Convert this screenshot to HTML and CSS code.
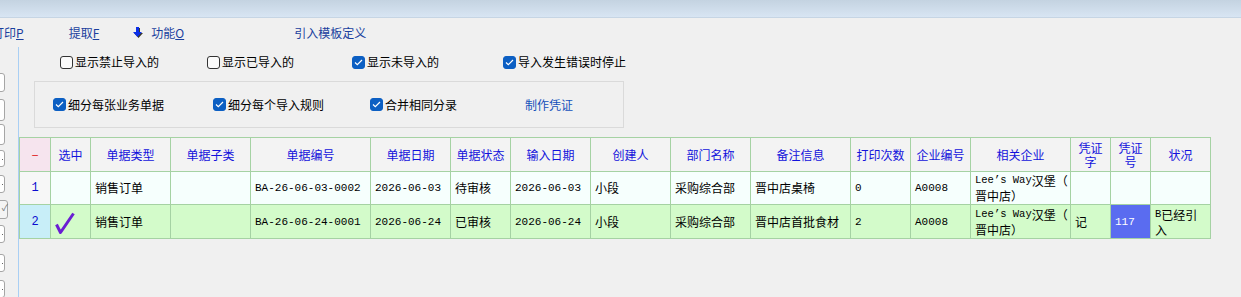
FILE: index.html
```html
<!DOCTYPE html>
<html lang="zh-CN">
<head>
<meta charset="utf-8">
<title>引入模板</title>
<link rel="stylesheet" href="styles.css">
</head>
<body>
<div class="titlebar"></div>
<div class="toolbar">
  <span class="tb tb-print">打印<u>P</u></span>
  <span class="tb tb-fetch">提取<u>F</u></span>
  <span class="tb tb-func"><svg class="arrow" width="10" height="11" viewBox="0 0 10 11"><path d="M4 1h3v5h3l-4.5 5L1 6h3z" fill="#3a3a2a"/><path d="M3 0h3v5h3L4.5 10 0 5h3z" fill="#0a2ee8"/></svg>功能<u>O</u></span>
  <span class="tb tb-tpl">引入模板定义</span>
</div>
<div class="main">
  <div class="side">
    <div class="sbox s1"></div>
    <div class="sbox s2"></div>
    <div class="sbox s3"></div>
    <div class="sbox s4"><i></i></div>
    <div class="sbox s5"><i></i></div>
    <div class="sbox s6"><b>✓</b></div>
    <div class="sbox s7"><i></i></div>
    <div class="sbox s8"><i></i></div>
    <div class="sbox s9"><i></i></div>
  </div>
  <div class="content">
    <div class="opts">
      <label class="cb"><span class="box"></span>显示禁止导入的</label>
      <label class="cb"><span class="box"></span>显示已导入的</label>
      <label class="cb"><span class="box on"><svg width="9" height="7" viewBox="0 0 9 7"><path d="M1 3.5l2.3 2.2L8 1" fill="none" stroke="#fff" stroke-width="1.2"/></svg></span>显示未导入的</label>
      <label class="cb"><span class="box on"><svg width="9" height="7" viewBox="0 0 9 7"><path d="M1 3.5l2.3 2.2L8 1" fill="none" stroke="#fff" stroke-width="1.2"/></svg></span>导入发生错误时停止</label>
    </div>
    <div class="group">
      <label class="cb"><span class="box on"><svg width="9" height="7" viewBox="0 0 9 7"><path d="M1 3.5l2.3 2.2L8 1" fill="none" stroke="#fff" stroke-width="1.2"/></svg></span>细分每张业务单据</label>
      <label class="cb"><span class="box on"><svg width="9" height="7" viewBox="0 0 9 7"><path d="M1 3.5l2.3 2.2L8 1" fill="none" stroke="#fff" stroke-width="1.2"/></svg></span>细分每个导入规则</label>
      <label class="cb"><span class="box on"><svg width="9" height="7" viewBox="0 0 9 7"><path d="M1 3.5l2.3 2.2L8 1" fill="none" stroke="#fff" stroke-width="1.2"/></svg></span>合并相同分录</label>
      <span class="link">制作凭证</span>
    </div>
    <table class="grid">
      <colgroup>
        <col class="w31"><col class="w40"><col class="w80"><col class="w80"><col class="w120"><col class="w80"><col class="w60"><col class="w80"><col class="w80"><col class="w80"><col class="w100"><col class="w60"><col class="w60"><col class="w100"><col class="w40"><col class="w40"><col class="w60">
      </colgroup>
      <thead>
        <tr>
          <th class="corner">−</th><th>选中</th><th>单据类型</th><th>单据子类</th><th>单据编号</th><th>单据日期</th><th>单据状态</th><th>输入日期</th><th>创建人</th><th>部门名称</th><th>备注信息</th><th>打印次数</th><th>企业编号</th><th>相关企业</th><th class="wrap">凭证字</th><th class="wrap">凭证号</th><th>状况</th>
        </tr>
      </thead>
      <tbody>
        <tr class="r1">
          <td class="rn">1</td><td></td><td>销售订单</td><td></td><td class="mono">BA-26-06-03-0002</td><td class="mono">2026-06-03</td><td>待审核</td><td class="mono">2026-06-03</td><td>小段</td><td>采购综合部</td><td>晋中店桌椅</td><td class="mono">0</td><td class="mono">A0008</td><td class="two"><span class="mono">Lee’s Way</span>汉堡（<br>晋中店）</td><td></td><td></td><td></td>
        </tr>
        <tr class="r2">
          <td class="rn">2</td><td class="chk"><svg class="tick" width="20" height="23" viewBox="0 0 20 23"><path d="M1.5 12.5L5.5 20.5L18.5 1.5" fill="none" stroke="#6a1ed2" stroke-width="3" stroke-linejoin="round"/></svg></td><td>销售订单</td><td></td><td class="mono">BA-26-06-24-0001</td><td class="mono">2026-06-24</td><td>已审核</td><td class="mono">2026-06-24</td><td>小段</td><td>采购综合部</td><td>晋中店首批食材</td><td class="mono">2</td><td class="mono">A0008</td><td class="two"><span class="mono">Lee’s Way</span>汉堡（<br>晋中店）</td><td>记</td><td class="sel mono">117</td><td class="two"><span class="mono">B</span>已经引<br>入</td>
        </tr>
      </tbody>
    </table>
  </div>
</div>
</body>
</html>
```

FILE: styles.css
```css
html, body {
  margin: 0;
  padding: 0;
}
body {
  width: 1241px;
  height: 297px;
  overflow: hidden;
  background: #f0f0f0;
  font-family: "Noto Sans CJK SC", "Noto Sans", sans-serif;
  font-size: 12px;
  color: #000;
}
.titlebar {
  height: 17px;
  background: linear-gradient(#c4d3e1, #d8e5f3);
  border-bottom: 1px solid #c6d5e4;
}
.toolbar {
  height: 29px;
  display: flex;
  align-items: center;
  color: #1a3f9e;
  white-space: nowrap;
}
.tb {
  display: flex;
  align-items: center;
  line-height: 14px;
}
.tb u {
  text-decoration: underline;
  text-underline-offset: 1px;
}
.tb-print { margin-left: -8px; }
.tb-fetch { margin-left: 45px; }
.tb-func { margin-left: 34px; }
.arrow { margin-right: 8px; margin-top: -1px; }
.tb-tpl { margin-left: 110px; }

.main {
  display: flex;
  height: 251px;
}
.side {
  width: 19px;
  flex: none;
  border-right: 1px solid #a9cff4;
  display: flex;
  flex-direction: column;
  padding-top: 26px;
  box-sizing: border-box;
}
.sbox {
  position: relative;
  margin-left: -10px;
  width: 15px;
  background: #fff;
  border: 1px solid #a6a6a6;
  border-radius: 3px;
  box-sizing: border-box;
}
.sbox i {
  position: absolute;
  right: 1px;
  top: 50%;
  width: 1px;
  height: 1px;
  background: #666;
}
.sbox b {
  position: absolute;
  right: -1px;
  top: 1px;
  font-size: 9px;
  font-weight: normal;
  color: #777;
  line-height: 12px;
}
.s1 { height: 19px; }
.s2 { height: 22px; margin-top: 7px; }
.s3 { height: 22px; margin-top: 3px; }
.s4 { height: 17px; margin-top: 5px; }
.s5 { height: 18px; margin-top: 8px; }
.s6 { height: 19px; margin-top: 7px; width: 18px; background: #f4f4f4; }
.s7 { height: 19px; margin-top: 6px; }
.s8 { height: 18px; margin-top: 11px; }
.s9 { height: 18px; margin-top: 8px; }

.content {
  flex: 1;
  display: flex;
  flex-direction: column;
  align-items: flex-start;
}
.cb {
  display: flex;
  align-items: center;
  white-space: nowrap;
  line-height: 16px;
}
.box {
  width: 13px;
  height: 13px;
  box-sizing: border-box;
  border: 1px solid #333;
  border-radius: 3px;
  background: #fbfbfb;
  margin-right: 2px;
  display: flex;
  align-items: center;
  justify-content: center;
}
.box.on {
  background: #0c5fc3;
  border-color: #0c5fc3;
}
.opts {
  display: grid;
  grid-template-columns: 147px 145px 151px auto;
  margin-top: 7px;
  margin-left: 41px;
  height: 16px;
  align-items: center;
}
.group {
  display: grid;
  grid-template-columns: 160px 157px 155px auto;
  align-items: center;
  margin-top: 11px;
  margin-left: 15px;
  width: 590px;
  height: 47px;
  box-sizing: border-box;
  border: 1px solid #dadada;
  padding-left: 18px;
}
.link {
  color: #1450bb;
}

.grid {
  margin-top: 9px;
  border-collapse: collapse;
  table-layout: fixed;
  width: 1192px;
}
.grid th, .grid td {
  border: 1px solid #a5d2a3;
  padding: 0 0 0 4px;
  overflow: hidden;
  white-space: nowrap;
  text-align: left;
  font-weight: normal;
}
.grid th {
  height: 33px;
  background: #f3f3f3;
  color: #1212dc;
  text-align: center;
  padding: 0;
}
.grid th.wrap {
  white-space: normal;
  line-height: 14px;
  padding: 0 4px;
}
.grid th.corner {
  background: #f6e4ee;
  color: #e01818;
}
.grid td { height: 32px; line-height: 16px; }
.r1 td { background: #f6fffd; }
.r2 td { background: #d3fbca; height: 33px; }
.grid td.rn {
  text-align: center;
  color: #0c0cd0;
  padding: 0;
  font-family: "Liberation Mono", monospace;
}
.r1 td.rn { background: #f7f7f7; }
.r2 td.rn { background: #c8eef8; }
.mono {
  font-family: "Liberation Mono", "Noto Sans CJK SC", monospace;
  font-size: 11px;
}
.grid td.chk { padding: 0 0 0 4px; }
.tick { display: block; margin-top: 3px; }
.grid td.sel {
  background: #5a6cf0;
  color: #fff;
}
.grid td.two { line-height: 15px; padding-top: 0; }
.grid td.two .mono { vertical-align: top; line-height: 15px; font-size: 10.5px; }
.w31 { width: 31px; }
.w40 { width: 40px; }
.w60 { width: 60px; }
.w80 { width: 80px; }
.w100 { width: 100px; }
.w120 { width: 120px; }
```
